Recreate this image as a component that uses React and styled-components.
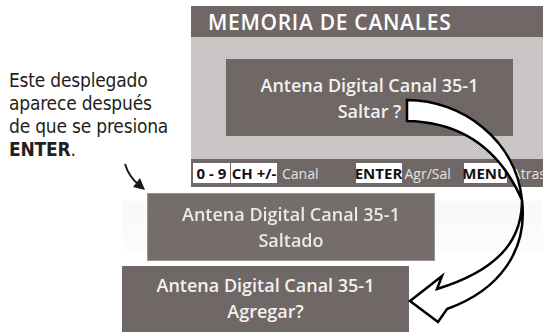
import React from "react";
import styled, { createGlobalStyle, css } from "styled-components";

const Global = createGlobalStyle`
  html, body { margin: 0; padding: 0; background: #ffffff; }
  #root { width: 543px; height: 332px; }
`;

const darkTexture = css`
  background-color: #6f6866;
  background-image: repeating-conic-gradient(#736c6a 0 25%, #6a6361 0 50%);
  background-size: 2px 2px;
`;

const Page = styled.div`
  position: relative;
  width: 543px;
  height: 332px;
  overflow: hidden;
  background: #ffffff;
  font-family: "Open Sans", "Noto Sans", sans-serif;
`;

const Top = styled.div`
  display: flex;
  align-items: flex-start;
  height: 187px;
`;

const Note = styled.p`
  flex: 0 0 182px;
  margin: 0;
  padding: 69px 0 0 9px;
  font-family: "Liberation Sans Narrow", "DejaVu Sans Condensed", "Liberation Sans", sans-serif;
  font-stretch: condensed;
  font-size: 19px;
  letter-spacing: -0.2px;
  line-height: 23px;
  color: #231f20;
  strong { font-weight: 700; }
`;

const Panel = styled.section`
  flex: 0 0 357px;
  margin-top: 6px;
  display: flex;
  flex-direction: column;
`;

const Header = styled.h1`
  margin: 0;
  height: 31px;
  padding-left: 17px;
  display: flex;
  align-items: center;
  ${darkTexture};
  color: #ffffff;
  font-size: 21px;
  font-weight: 600;
  letter-spacing: 0.7px;
`;

const Body = styled.div`
  height: 122px;
  display: flex;
  justify-content: center;
  padding-top: 22px;
  box-sizing: border-box;
  background-color: #c9c6c5;
  background-image: repeating-conic-gradient(#d1cecd 0 25%, #c0bcbb 0 50%);
  background-size: 2px 2px;
`;

const Dialog = styled.div`
  box-sizing: border-box;
  width: ${(p) => p.$w}px;
  height: ${(p) => p.$h}px;
  margin-left: ${(p) => p.$left || 0}px;
  display: flex;
  flex-direction: column;
  align-items: center;
  justify-content: ${(p) => (p.$top ? "flex-start" : "center")};
  padding-top: ${(p) => p.$top || 0}px;
  ${darkTexture};
  color: #f3f1f0;
  font-size: 18px;
  font-weight: 600;
  line-height: 26px;
  ${(p) =>
    p.$faded &&
    css`
      background-color: #756d6b;
      background-image: none;
      border: 1px solid #9a9391;
      color: #ebe8e7;
      & > span { filter: blur(0.55px); }
    `}
`;

const Line = styled.span`
  white-space: nowrap;
`;

const Footer = styled.div`
  height: 28px;
  display: flex;
  align-items: center;
  padding-left: 2px;
  ${darkTexture};
  color: #e6e3e2;
  font-size: 14px;
  white-space: nowrap;
`;

const Key = styled.span`
  display: inline-flex;
  align-items: center;
  justify-content: center;
  height: 20px;
  width: ${(p) => p.$w}px;
  margin-left: ${(p) => p.$gap || 0}px;
  background: #ffffff;
  color: #111111;
  font-weight: 700;
  font-size: 15px;
`;

const Label = styled.span`
  margin-left: ${(p) => p.$gap || 4}px;
`;

const GhostRow = styled.div`
  margin: 6px 0 0 123px;
  height: 68px;
  display: flex;
  background:
    linear-gradient(to bottom, transparent 8px, rgba(240, 240, 240, 0.4) 8px, rgba(246, 246, 246, 0.4) 57px, transparent 57px);
`;

const LowerDialog = styled(Dialog)`
  margin-top: 5px;
`;

const Overlay = styled.svg`
  position: absolute;
  left: 0;
  top: 0;
  width: 543px;
  height: 332px;
  pointer-events: none;
`;

export default function App() {
  return (
    <Page>
      <Global />
      <Top>
        <Note>
          Este desplegado
          <br />
          aparece después
          <br />
          de que se presiona
          <br />
          <strong>ENTER</strong>.
        </Note>
        <Panel>
          <Header>MEMORIA DE CANALES</Header>
          <Body>
            <Dialog $w={287} $h={77}>
              <Line>Antena Digital Canal 35-1</Line>
              <Line>Saltar ?</Line>
            </Dialog>
          </Body>
          <Footer>
            <Key $w={37}>0 - 9</Key>
            <Key $w={46} $gap={1}>CH +/-</Key>
            <Label $gap={5}>Canal</Label>
            <Key $w={46} $gap={37}>ENTER</Key>
            <Label $gap={3}>Agr/Sal</Label>
            <Key $w={43} $gap={13}>MENU</Key>
            <Label $gap={5}>Atras</Label>
          </Footer>
        </Panel>
      </Top>
      <GhostRow>
        <Dialog $w={288} $h={68} $left={24} $faded>
          <Line>Antena Digital Canal 35-1</Line>
          <Line>Saltado</Line>
        </Dialog>
      </GhostRow>
      <LowerDialog $w={287} $h={70} $left={122} $top={6}>
        <Line>Antena Digital Canal 35-1</Line>
        <Line>Agregar?</Line>
      </LowerDialog>
      <Overlay viewBox="0 0 543 332">
        <path
          d="M407,100 C462,100 516,140 522,200 C522,235 505,268 437,289 L442,276 L410,301 L438,322 L447,309 C500,290 528,250 522,200 C500,150 462,122 407,121 Z"
          fill="#ffffff"
          stroke="#000000"
          strokeWidth="2.5"
          strokeLinejoin="miter"
        />
        <path d="M125,164 Q129,177 139,185" fill="none" stroke="#1a1a1a" strokeWidth="2" />
        <polygon points="145,190 133,187 140,178" fill="#1a1a1a" />
      </Overlay>
    </Page>
  );
}
